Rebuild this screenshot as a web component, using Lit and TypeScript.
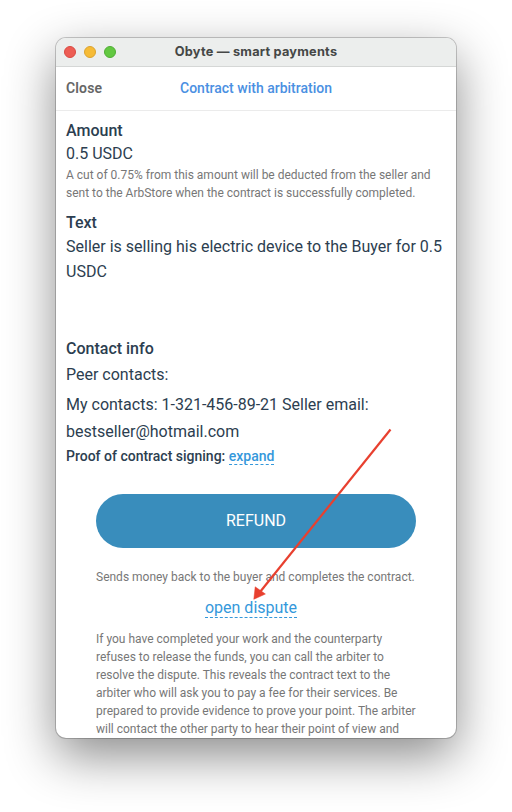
import { LitElement, html, css } from "lit";
import { customElement } from "lit/decorators.js";

@customElement("app-root")
class AppRoot extends LitElement {
  static styles = css`
    :host {
      display: flex;
      box-sizing: border-box;
      position: relative;
      width: 512px;
      height: 812px;
      padding: 38px 56px 0;
      overflow: hidden;
      background: #fff;
      font-family: Roboto, "Liberation Sans", sans-serif;
      color: #2c3e50;
      white-space: nowrap;
    }
    .window {
      width: 400px;
      height: 700px;
      border-radius: 10px;
      background: #fff;
      box-shadow: 0 0 0 1px rgba(0, 0, 0, 0.2), 0 18px 50px rgba(0, 0, 0, 0.46);
    }
    .clip {
      height: 700px;
      overflow: hidden;
      border-radius: 10px;
    }
    .titlebar {
      display: grid;
      grid-template-columns: 54px 1fr 54px;
      align-items: center;
      height: 29px;
      box-sizing: border-box;
      padding: 0 7px;
      background: #eceeed;
      border-bottom: 1px solid #d5d7d6;
    }
    .lights {
      display: flex;
      gap: 8px;
      padding-left: 1px;
    }
    .light {
      flex: none;
      width: 12px;
      height: 12px;
      box-sizing: border-box;
      border-radius: 50%;
    }
    .red { background: #ed5d54; border: 1px solid #d94a42; }
    .yellow { background: #f6bb36; border: 1px solid #dba32f; }
    .green { background: #62c841; border: 1px solid #50ad35; }
    .title {
      font: 700 12.75px/28px Inter, sans-serif;
      letter-spacing: 0.22px;
      color: #454746;
      text-align: center;
    }
    .nav {
      display: grid;
      grid-template-columns: 60px 1fr 60px;
      align-items: center;
      height: 44px;
      box-sizing: border-box;
      padding: 0 10px 2px;
      border-bottom: 1px solid #ebebeb;
      font-size: 14px;
      font-weight: 500;
    }
    .close { color: #666; font-weight: 600; letter-spacing: 0.15px; }
    .heading { color: #4a90e2; text-align: center; }
    .body { padding: 8px 10px 0; }
    .h { font-size: 16px; font-weight: 500; line-height: 24px; }
    .p { font-size: 16px; line-height: 25px; }
    .amount { line-height: 22px; padding-bottom: 1px; }
    .small { font-size: 12px; line-height: 18px; color: #777; }
    .text { margin-top: 9px; margin-bottom: -1px; }
    .contact { margin-top: 53px; }
    .peer { line-height: 28px; }
    .mine { line-height: 27px; margin-top: 2px; }
    .proof { font-size: 14px; font-weight: 500; line-height: 22px; }
    .link {
      display: inline-block;
      color: #3498db;
      line-height: 15px;
      border-bottom: 1px dashed #3498db;
    }
    .actions { padding: 0 30px; margin-top: 27px; }
    .refund {
      display: block;
      width: 320px;
      height: 54px;
      padding: 0;
      border: 0;
      border-radius: 27px;
      background: #398dbc;
      color: #fff;
      font: 400 16px/54px Roboto, sans-serif;
    }
    .note { margin-top: 20px; }
    .dispute { height: 22px; margin-top: 12px; text-align: center; padding-right: 10px; font-size: 16px; line-height: 20px; }
    .dispute .link { line-height: 19px; }
    .details { margin-top: 10px; }
    .arrow { position: absolute; left: 0; top: 0; }
  `;

  render() {
    return html`
      <div class="window"><div class="clip">
        <div class="titlebar">
          <div class="lights"><i class="light red"></i><i class="light yellow"></i><i class="light green"></i></div>
          <div class="title">Obyte — smart payments</div>
        </div>
        <div class="nav">
          <div class="close">Close</div>
          <div class="heading">Contract with arbitration</div>
        </div>
        <div class="body">
          <div class="h">Amount</div>
          <div class="p amount">0.5 USDC</div>
          <div class="small">A cut of 0.75% from this amount will be deducted from the seller and<br>sent to the ArbStore when the contract is successfully completed.</div>
          <div class="h text">Text</div>
          <div class="p">Seller is selling his electric device to the Buyer for 0.5<br>USDC</div>
          <div class="h contact">Contact info</div>
          <div class="p peer">Peer contacts:</div>
          <div class="p mine">My contacts: 1-321-456-89-21 Seller email:<br>bestseller@hotmail.com</div>
          <div class="proof">Proof of contract signing: <span class="link">expand</span></div>
          <div class="actions">
            <button class="refund">REFUND</button>
            <div class="small note">Sends money back to the buyer and completes the contract.</div>
            <div class="dispute"><span class="link">open dispute</span></div>
            <div class="small details">If you have completed your work and the counterparty<br>refuses to release the funds, you can call the arbiter to<br>resolve the dispute. This reveals the contract text to the<br>arbiter who will ask you to pay a fee for their services. Be<br>prepared to provide evidence to prove your point. The arbiter<br>will contact the other party to hear their point of view and</div>
          </div>
        </div>
      </div></div>
      <svg class="arrow" width="512" height="812" viewBox="0 0 512 812">
        <path d="M390.5 429.5L260 592" stroke="#e8402f" stroke-width="2.2" fill="none" />
        <path d="M253.8 599.3L255.2 586.8L265.4 594Z" fill="#e8402f" stroke="#e8402f" stroke-width="0.5" />
      </svg>
    `;
  }
}
